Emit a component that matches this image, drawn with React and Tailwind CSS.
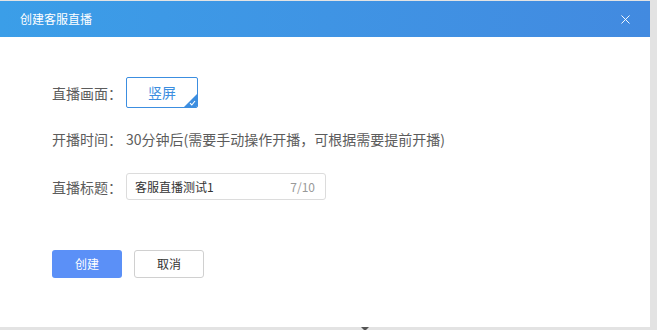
import { X } from "lucide-react";

const font = { fontFamily: '"Microsoft YaHei", "Noto Sans CJK SC", "Noto Sans", sans-serif' };

function Row({ label, children, className = "" }) {
  return (
    <div className={`flex items-center ${className}`}>
      <span className="w-[74px] text-[14px] leading-[20px] text-[#5c5c5c]">{label}</span>
      {children}
    </div>
  );
}

export default function App() {
  return (
    <div className="w-[657px] h-[330px] bg-[#e3e3e3] pt-px overflow-hidden" style={font}>
      <div className="relative w-[650px] h-[326px] bg-white">
        {/* header */}
        <div className="h-[36px] flex items-center justify-between pl-[20px] pr-[17px] bg-gradient-to-r from-[#3b9ee8] to-[#428ae0]">
          <span className="text-[12px] text-white">创建客服直播</span>
          <X size={15} strokeWidth={1.5} className="text-white" />
        </div>

        <div className="pl-[52px] pt-[40px]">
          <Row label="直播画面：">
            <button className="relative w-[72px] h-[31px] border border-[#3c8ee0] rounded-[2px] text-[14px] text-[#3c8ee0] overflow-hidden">
              竖屏
              <span className="absolute right-0 bottom-0 w-0 h-0 border-l-[13px] border-l-transparent border-b-[13px] border-b-[#3c8ee0]" />
              <svg className="absolute right-[1px] bottom-[1px]" width="7" height="6" viewBox="0 0 7 6">
                <path d="M1 3.2 L2.8 5 L6 1" stroke="white" strokeWidth="1.1" fill="none" />
              </svg>
            </button>
          </Row>

          <Row label="开播时间：" className="mt-[21px]">
            <span className="text-[14px] leading-[20px] text-[#5c5c5c]">30分钟后(需要手动操作开播，可根据需要提前开播)</span>
          </Row>

          <Row label="直播标题：" className="mt-[24px]">
            <div className="w-[200px] h-[27px] border border-[#dcdcdc] rounded-[3px] flex items-center justify-between pl-[8px] pr-[10px]">
              <span className="text-[12px] text-[#333]">客服直播测试1</span>
              <span className="text-[12px] text-[#999]">7/10</span>
            </div>
          </Row>

          <div className="flex gap-[12px] mt-[50px]">
            <button className="w-[70px] h-[28px] rounded-[3px] bg-[#5b90f7] text-white text-[12px]">创建</button>
            <button className="w-[70px] h-[28px] rounded-[3px] border border-[#d0d0d0] bg-white text-[#333] text-[12px]">取消</button>
          </div>
        </div>

        <span className="absolute left-[361px] -bottom-[4px] w-0 h-0 border-l-[4px] border-l-transparent border-r-[4px] border-r-transparent border-t-[4px] border-t-[#555]" />
      </div>
    </div>
  );
}
